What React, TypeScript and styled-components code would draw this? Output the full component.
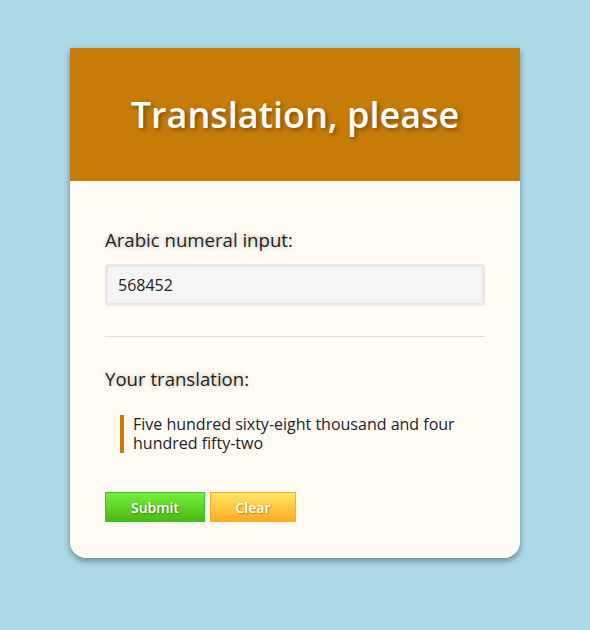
import React, { useState } from "react";
import styled, { createGlobalStyle } from "styled-components";

const GlobalStyle = createGlobalStyle`
  body {
    margin: 0;
    background: #add8e6;
    font-family: "Open Sans", "Liberation Sans", sans-serif;
  }
`;

const Page = styled.div`
  padding: 48px 0 40px;
`;

const Card = styled.div`
  width: 450px;
  margin: 0 auto;
  background: #fffbf3;
  border-radius: 0 0 16px 16px;
  box-shadow: 0 3px 6px rgba(40, 70, 80, 0.55);
  overflow: hidden;
`;

const Header = styled.header`
  height: 133px;
  background: #c67c07;
  display: flex;
  align-items: center;
  justify-content: center;
`;

const Title = styled.h1`
  margin: 0;
  color: #fff;
  font-size: 36px;
  font-weight: 600;
  text-shadow: 2px 2px 4px rgba(80, 40, 0, 0.6);
`;

const Body = styled.div`
  padding: 47px 35px 36px;
`;

const Label = styled.label`
  display: block;
  font-size: 18.6px;
  line-height: 24px;
  font-weight: 400;
  color: #1e1e1e;
  text-shadow: 0 0 5px rgba(0, 0, 0, 0.3);
  margin-bottom: 12px;
`;

const Input = styled.input`
  box-sizing: border-box;
  width: 100%;
  height: 42px;
  padding: 0 10px;
  background: #f5f5f5;
  border: 3px solid #e8e8e6;
  border-radius: 4px;
  font-family: inherit;
  font-size: 16px;
  color: #222;
  outline: none;
`;

const Divider = styled.hr`
  border: 0;
  border-top: 1px solid #dcdcdc;
  margin: 30px 0 30px;
`;

const Quote = styled.blockquote`
  margin: 24px 0 0 15px;
  padding-left: 9px;
  border-left: 4px solid #c67c07;
  font-size: 16px;
  line-height: 19px;
  color: #1c1c2c;
`;

const Actions = styled.div`
  display: flex;
  gap: 5px;
  margin-top: 39px;
`;

const Button = styled.button<{ $tone: "green" | "yellow"; $w: number }>`
  width: ${({ $w }) => $w}px;
  height: 30px;
  border: 1px solid ${({ $tone }) => ($tone === "green" ? "#2ec72e" : "#ffaa22")};
  background: ${({ $tone }) =>
    $tone === "green"
      ? "linear-gradient(#74f03c, #4db713)"
      : "linear-gradient(#ffe867, #ffad22)"};
  color: #fff;
  font-family: inherit;
  font-weight: 600;
  font-size: 14px;
  text-shadow: 1px 1px 2px rgba(0, 0, 0, 0.35);
  cursor: pointer;
  padding: 0;
`;

export default function App() {
  const [value, setValue] = useState("568452");
  return (
    <>
      <GlobalStyle />
      <Page>
        <Card>
          <Header>
            <Title>Translation, please</Title>
          </Header>
          <Body>
            <Label>Arabic numeral input:</Label>
            <Input value={value} onChange={(e) => setValue(e.target.value)} />
            <Divider />
            <Label>Your translation:</Label>
            <Quote>Five hundred sixty-eight thousand and four hundred fifty-two</Quote>
            <Actions>
              <Button $tone="green" $w={100}>Submit</Button>
              <Button $tone="yellow" $w={86} onClick={() => setValue("")}>Clear</Button>
            </Actions>
          </Body>
        </Card>
      </Page>
    </>
  );
}
